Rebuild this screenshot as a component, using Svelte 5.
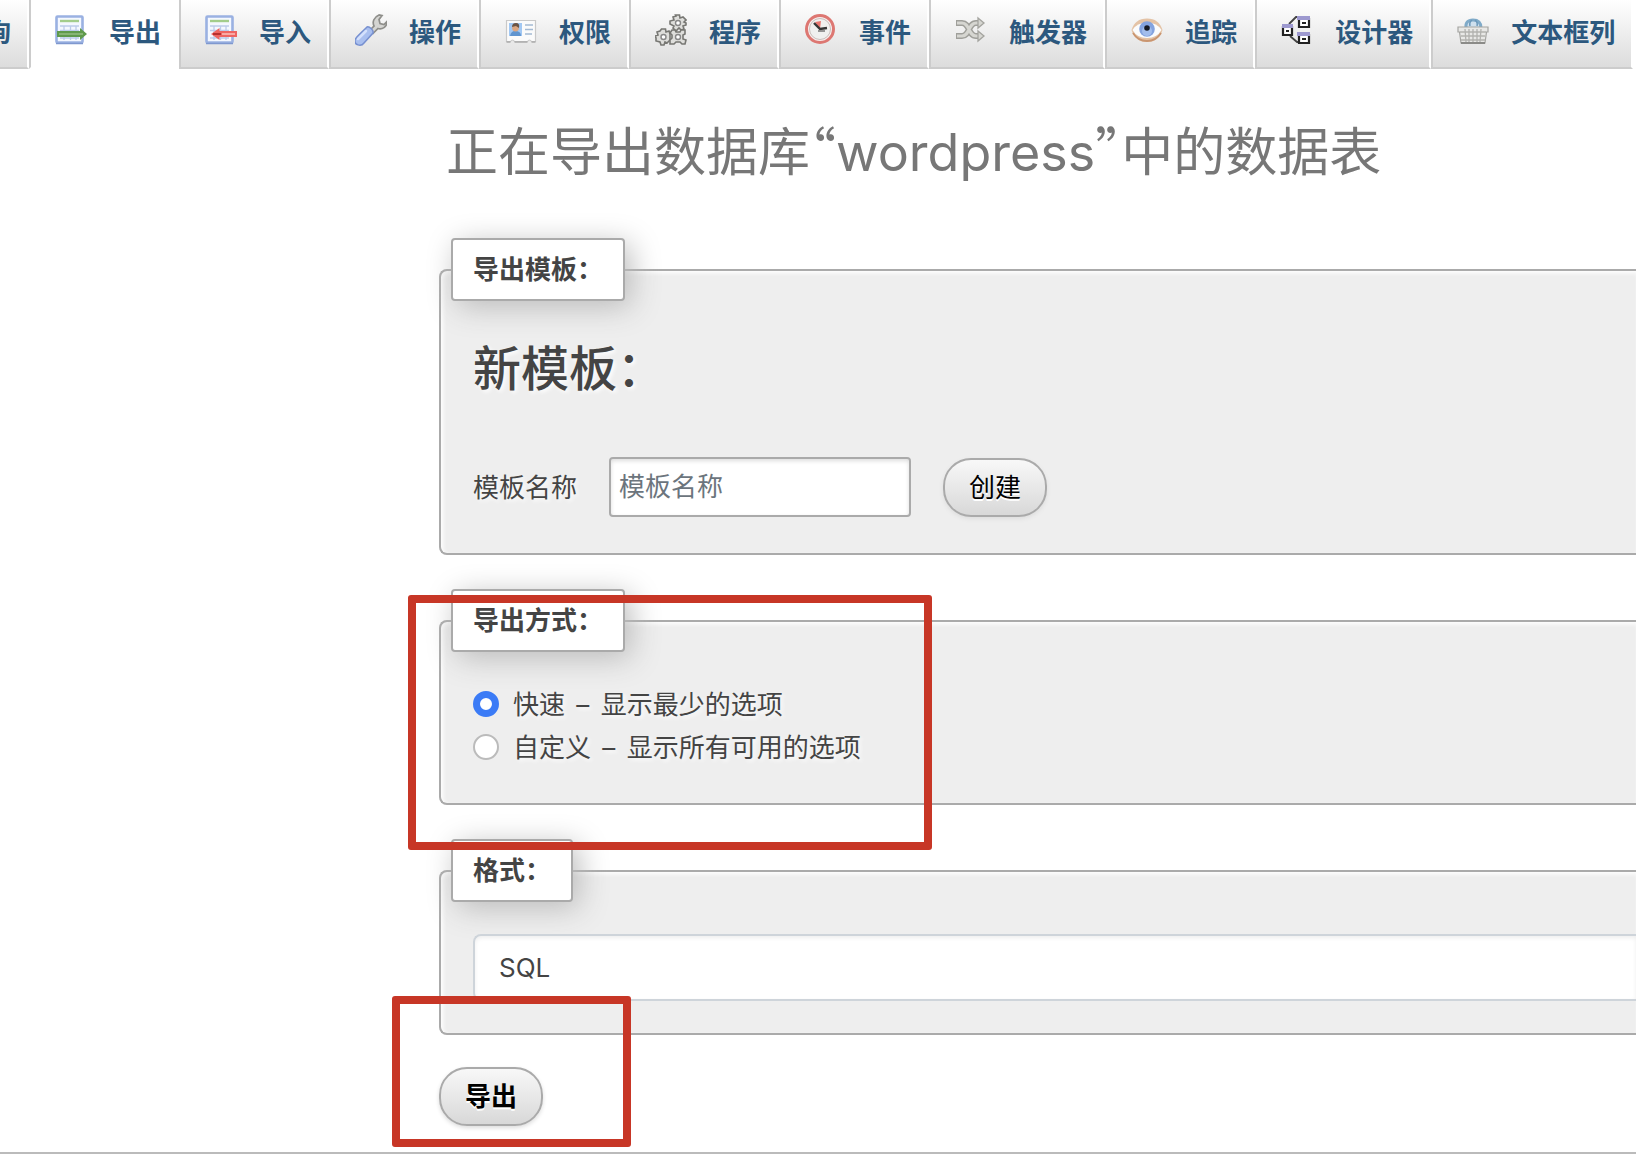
<script lang="ts">
    /*--------------------------------- Data ---------------------------------*/

    const tabs = [
        { id: "export", label: "导出" },
        { id: "import", label: "导入" },
        { id: "operations", label: "操作" },
        { id: "privileges", label: "权限" },
        { id: "routines", label: "程序" },
        { id: "events", label: "事件" },
        { id: "triggers", label: "触发器" },
        { id: "tracking", label: "追踪" },
        { id: "designer", label: "设计器" },
        { id: "columns", label: "文本框列" },
    ];

    const methods = [
        { value: "quick", name: "快速", hint: "显示最少的选项" },
        { value: "custom", name: "自定义", hint: "显示所有可用的选项" },
    ];

    /*--------------------------------- State --------------------------------*/

    let active = "export";
    let method = "quick";
    let format = "sql";
    let templateName = "";
</script>

<nav>
    <ul>
        <li class="cut"><a href="#query">查询</a></li>
        {#each tabs as tab}
            <li class:active={tab.id === active}>
                <a href="#{tab.id}" on:click={() => (active = tab.id)}>
                    <svg viewBox="0 0 32 32" aria-hidden="true">
                        {#if tab.id === "export" || tab.id === "import"}
                            <rect x="1.5" y="2.5" width="26" height="26" rx="1" fill="#f4f8ff" stroke="#9ab1e2" stroke-width="2.6" />
                            <path d="M1 29.5h27" stroke="#7f98cf" stroke-width="1.5" />
                            <path d="M5 7h19" stroke="#a3cd8c" stroke-width="2.4" />
                            <path d="M5 12h19M5 16.5h19M5 24h19M9 12v14M15.5 12v14M21 12v14" stroke="#bccbea" stroke-width="1.3" />
                            {#if tab.id === "export"}
                                <path d="M2 17h23v-3l7 6-7 6v-3H2z" fill="#5f9a4c" />
                                <path d="M4 20h24" stroke="#86b474" stroke-width="2" />
                            {:else}
                                <path d="M32 17H14.5V14L6 20l8.5 6v-3H32z" fill="#ee6562" />
                                <path d="M8 20h8" stroke="#b62f2f" stroke-width="2" />
                                <path d="M17 20h13" stroke="#f8aaa5" stroke-width="2" />
                            {/if}
                        {:else if tab.id === "operations"}
                            <path d="M14 17l5-5c-2-4 0-9 5-11l3 .5-3 4 1 4 4 1 3-3c0 6-5 8-9 7l-5 5z" fill="#d5d5d2" stroke="#8e8e8a" stroke-width="1.7" />
                            <path d="M12 13c2-1 7 3 6 6L9 29c-3 4-10 2-9-3 0-2 4-5 12-13z" fill="#a9bfef" stroke="#7790d0" stroke-width="1.5" />
                            <path d="M11 17L3 25" stroke="#d3e0fc" stroke-width="2.5" stroke-linecap="round" />
                        {:else if tab.id === "privileges"}
                            <path d="M1.5 6.5h29v21h-4q-2-3-4 0h-13q-2-3-4 0h-4z" fill="#fbfbfb" stroke="#c9c9c9" stroke-width="1.2" />
                            <path d="M1.5 28h4m4 0h13m4 0h4" stroke="#aaa" stroke-width="1.4" />
                            <rect x="4" y="9" width="13" height="13" fill="#a2c8f3" />
                            <path d="M5 22q1-5 5-5 6 0 6 5z" fill="#5f94cf" />
                            <circle cx="10.5" cy="14" r="3.4" fill="#dca681" />
                            <path d="M7 13q0-4 4-4t3 5l-3-2z" fill="#6b5546" />
                            <path d="M20 11h8M20 15.5h8M20 20h7" stroke="#a4bad4" stroke-width="1.7" />
                        {:else if tab.id === "routines"}
                            <g fill="#dededb" stroke="#777773" stroke-width="1.6">
                                <path d="M20.5 1h4l.5 3 3-1 3 3-2 2 2 1v2l-3 1 1 3-3 1-2-2-3 3-3-3 1-2-4-2v-3l4-1-1-3 3-1z" />
                                <path d="M6.5 15h4l.5 3 3-1 1 3v6l-3 3-2-1-1 3h-3l-1-3-4-1v-3l-1-2 3-1-1-3 3-1z" />
                                <path d="M17 16h3l1 2h4l1-2h4v4l-2 1v4l3 1-1 4h-3l-2-2h-4l-2 2h-4v-4l2-2v-3l-2-2z" />
                            </g>
                            <g fill="#fff" stroke="#888" stroke-width="1.4">
                                <circle cx="23" cy="9" r="2.5" />
                                <circle cx="8.5" cy="23" r="2.5" />
                                <circle cx="23" cy="23" r="2.5" />
                            </g>
                        {:else if tab.id === "events"}
                            <circle cx="15" cy="15" r="13.5" fill="#f6eeee" stroke="#dd7772" stroke-width="3" />
                            <circle cx="15" cy="15" r="10.5" fill="#f0f0ef" stroke="#c9bfbc" stroke-width="1" />
                            <path d="M15 15L10 8l6-1z" fill="#ea7770" />
                            <path d="M9 9l6 6 7-1" fill="none" stroke="#363636" stroke-width="2.4" />
                            <path d="M13 17h7" stroke="#777" stroke-width="1.5" />
                        {:else if tab.id === "triggers"}
                            <g fill="none" stroke-linejoin="round">
                                <path d="M1 9h6c8 0 6 13 14 13h3M1 22h6c8 0 6-13 14-13h3" stroke="#9f9f9a" stroke-width="6" />
                                <path d="M2 9h5c8 0 6 13 14 13h5M2 22h5c8 0 6-13 14-13h5" stroke="#d6d6d1" stroke-width="3" />
                            </g>
                            <path d="M23 4l6 5-6 5zM23 17l6 5-6 5z" fill="#d6d6d1" stroke="#a4a49f" stroke-width="1.3" />
                        {:else if tab.id === "tracking"}
                            <path d="M.5 16Q4 4.5 16 4.5T31.5 16Q28 28 16 28T.5 16z" fill="#e4c3a6" />
                            <path d="M2 19q5 8 14 8t14-8" fill="none" stroke="#c99570" stroke-width="1.8" />
                            <path d="M1.5 16Q6 8.5 16 8.5T30.5 16Q26 24 16 24T1.5 16z" fill="#fbfcfd" />
                            <circle cx="16" cy="15" r="7.8" fill="#84a3df" />
                            <circle cx="16" cy="17" r="5" fill="#a2bdec" />
                            <circle cx="16" cy="14" r="2.8" fill="#151925" />
                        {:else if tab.id === "designer"}
                            <path d="M8 10l7-7h3M9 22l7 6h3" fill="none" stroke="#444" stroke-width="1.8" />
                            <path d="M2 13h9v8H2zM18 5h10v8H18zM18 21h10v8H18z" fill="#fff" stroke="#222" stroke-width="2.2" />
                            <path d="M1 10h11v4H1zM16 2h13v4H16zM16 18h13v4H16z" fill="#9d99cf" />
                            <path d="M5 17h3M21 9h4M21 25h4" stroke="#222" stroke-width="2" />
                        {:else}
                            <path d="M9 14q-1-8 7-8t8 8" fill="#cfe0ee" stroke="#80abc9" stroke-width="3" />
                            <path d="M13 12q-1-4 2-6M20 12q1-4-2-6" fill="none" stroke="#6b98ba" stroke-width="1.5" />
                            <path d="M1 13h30v5h-1.5L28 29H4L2.5 18H1z" fill="#e8e8e6" stroke="#a5a5a2" stroke-width="1.2" />
                            <path d="M3 18h26M4 22h24M4 26h24M8 15l1 13M12 15v13M16 15v13M20 15v13M24 15l-1 13" stroke="#b2b2af" stroke-width="1.3" />
                            <path d="M4 29h24" stroke="#858582" stroke-width="1.8" />
                        {/if}
                    </svg>
                    {tab.label}
                </a>
            </li>
        {/each}
    </ul>
</nav>

<main>
    <h1>正在导出数据库<q>wordpress</q>中的数据表</h1>

    <form on:submit|preventDefault>
        <fieldset>
            <legend>导出模板：</legend>
            <div class="body template">
                <h2>新模板：</h2>
                <div class="row">
                    <label for="template-name">模板名称</label>
                    <input
                        type="text"
                        id="template-name"
                        placeholder="模板名称"
                        bind:value={templateName}
                    />
                    <button type="button">创建</button>
                </div>
            </div>
        </fieldset>

        <div class="marked">
            <fieldset>
                <legend>导出方式：</legend>
                <div class="body methods">
                    {#each methods as m}
                        <label>
                            <input type="radio" name="method" value={m.value} bind:group={method} />
                            <span class="text">{m.name} <span class="dash">–</span> {m.hint}</span>
                        </label>
                    {/each}
                </div>
            </fieldset>
            <span class="marker method-marker"></span>
        </div>

        <fieldset>
            <legend>格式：</legend>
            <div class="body format">
                <select aria-label="格式" bind:value={format}>
                    <option value="sql">SQL</option>
                </select>
            </div>
        </fieldset>

        <div class="marked">
            <button type="submit" class="submit">导出</button>
            <span class="marker submit-marker"></span>
        </div>
    </form>
</main>

<footer></footer>

<style>
    :global(body) {
        background: #fff;
        color: #444;
        font-family: Inter, "Noto Sans CJK SC", sans-serif;
        font-size: 26px;
        overflow-x: hidden;
    }

    /*--------------------------------- Tabs ---------------------------------*/

    nav {
        overflow: hidden;
    }

    ul {
        display: flex;
        list-style: none;
        margin: 0;
        padding: 0;
    }

    li {
        flex: none;
        box-sizing: border-box;
        height: 69px;
        border-left: 2px solid #ccc;
        border-right: 2px solid #fff;
        border-bottom: 2px solid #ccc;
        background: linear-gradient(#fff, #dcdcdc);
    }

    li.active {
        background: #fff;
        border-bottom-color: #fff;
    }

    li.cut {
        display: flex;
        justify-content: flex-end;
        width: 29px;
        border-left: 0;
        overflow: hidden;
    }

    li a {
        display: flex;
        align-items: center;
        gap: 22px;
        height: 60px;
        padding: 0 16px 0 24px;
        color: #2c587e;
        font-weight: bold;
        text-decoration: none;
        white-space: nowrap;
    }

    li svg {
        width: 32px;
        height: 32px;
    }

    /*--------------------------------- Page ---------------------------------*/

    main {
        padding: 46px 0 26px 439px;
    }

    h1 {
        margin: 0 0 47px 7px;
        color: #777;
        font-size: 52px;
        font-weight: normal;
        line-height: 76px;
        white-space: nowrap;
    }

    q {
        quotes: "“" "”";
    }

    q::before,
    q::after {
        font-family: "Noto Sans CJK SC", sans-serif;
        font-feature-settings: "halt";
        line-height: 0;
    }

    form {
        display: flex;
        flex-direction: column;
    }

    fieldset {
        min-width: 0;
        margin: 0 0 34px;
        padding: 0 0 0 10px;
        border: 2px solid #aaa;
        border-right: 0;
        border-radius: 8px 0 0 8px;
        background: #eee;
        box-shadow: inset 2px 2px 4px #fff;
        text-shadow: 2px 2px 4px #fff;
    }

    form > fieldset:nth-of-type(2) {
        margin-bottom: 32px;
    }

    legend {
        padding: 10px 20px;
        border: 2px solid #aaa;
        border-radius: 4px;
        background: #fff;
        box-shadow: 6px 6px 30px #bbb;
        font-weight: bold;
        line-height: 39px;
    }

    .body {
        padding-left: 22px;
    }

    .template {
        padding-top: 40px;
        padding-bottom: 36px;
    }

    h2 {
        margin: 0 0 60px;
        font-size: 48px;
        font-weight: 500;
        line-height: 56px;
    }

    .row {
        display: flex;
        align-items: center;
        gap: 32px;
    }

    .row label {
        padding-bottom: 4px;
    }

    input[type="text"] {
        box-sizing: border-box;
        width: 302px;
        height: 60px;
        padding: 0 8px 2px;
        border: 2px solid #aaa;
        border-radius: 4px;
        background: #fff;
        box-shadow: inset 0 2px 4px #ddd;
        color: #444;
        font: inherit;
    }

    input::placeholder {
        color: #6c757d;
    }

    button {
        box-sizing: border-box;
        height: 59px;
        padding: 0 24px 4px;
        border: 2px solid #aaa;
        border-radius: 28px;
        background: linear-gradient(#f8f8f8, #d8d8d8);
        box-shadow: 0 2px 4px #ddd;
        color: #000;
        font: inherit;
        text-shadow: 0 2px 0 #fff;
    }

    .submit {
        display: block;
        font-weight: bold;
    }

    .methods {
        padding-top: 30px;
        padding-bottom: 35px;
    }

    .methods label {
        display: flex;
        align-items: center;
        gap: 14px;
        height: 43px;
    }

    .text {
        padding-bottom: 2px;
    }

    .dash {
        padding: 0 4px;
    }

    input[type="radio"] {
        appearance: none;
        box-sizing: border-box;
        width: 26px;
        height: 26px;
        margin: 0;
        border: 2px solid #bbb;
        border-radius: 50%;
        background: #fff;
    }

    input[type="radio"]:checked {
        border: 7px solid #3b7bf6;
    }

    .format {
        padding-top: 32px;
        padding-bottom: 32px;
    }

    select {
        appearance: none;
        display: block;
        box-sizing: border-box;
        width: 100%;
        height: 67px;
        padding: 0 24px;
        border: 2px solid #ced4da;
        border-right: 0;
        border-radius: 8px 0 0 8px;
        background: #fff;
        box-shadow: inset 0 2px 4px #eee;
        color: #444;
        font: inherit;
    }

    /* red frames laid over the steps to follow */
    .marked {
        position: relative;
    }

    .marker {
        position: absolute;
        z-index: 1;
        box-sizing: border-box;
        border: 8px solid #c73626;
        border-radius: 3px;
        pointer-events: none;
    }

    .method-marker {
        top: 6px;
        left: -31px;
        width: 524px;
        height: 255px;
    }

    .submit-marker {
        top: -71px;
        left: -47px;
        width: 239px;
        height: 151px;
    }

    footer {
        height: 22px;
        border-top: 2px solid #bbb;
    }
</style>
